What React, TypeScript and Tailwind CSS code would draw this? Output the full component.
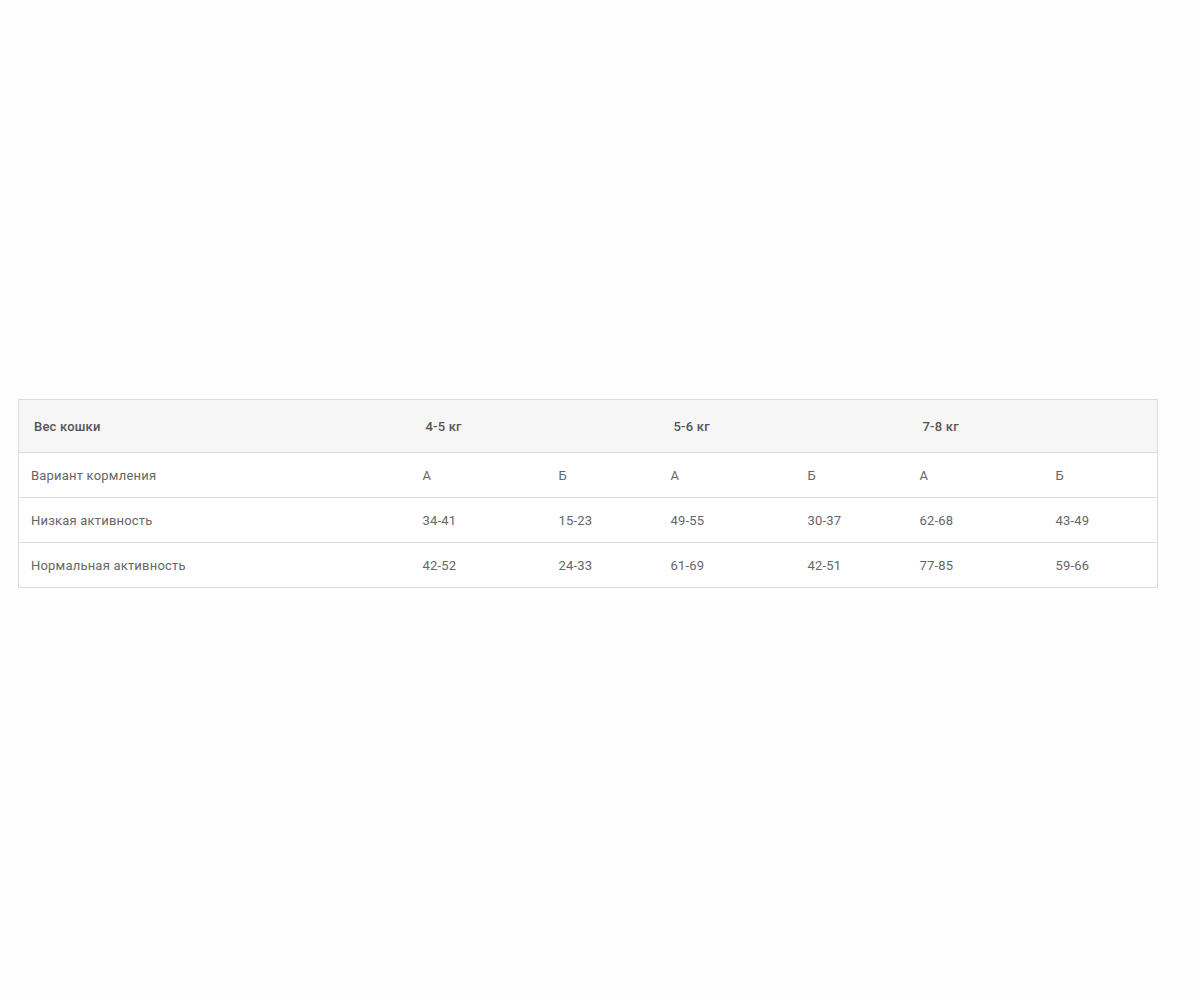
import React from "react";

const rows: string[][] = [
  ["Вариант кормления", "А", "Б", "А", "Б", "А", "Б"],
  ["Низкая активность", "34-41", "15-23", "49-55", "30-37", "62-68", "43-49"],
  ["Нормальная активность", "42-52", "24-33", "61-69", "42-51", "77-85", "59-66"],
];

export default function App() {
  return (
    <div className="w-[1200px] h-[1000px] bg-[#fefefe] pt-[399px] pl-[18px]" style={{ fontFamily: "Roboto, 'Noto Sans', sans-serif" }}>
      <table className="w-[1139px] border border-[#dcdcdc] border-collapse table-fixed text-[13px] tracking-[0.2px] text-[#666] bg-white">
        <colgroup>
          <col className="w-[392px]" />
          <col className="w-[136px]" />
          <col className="w-[112px]" />
          <col className="w-[137px]" />
          <col className="w-[112px]" />
          <col className="w-[136px]" />
          <col className="w-[114px]" />
        </colgroup>
        <thead>
          <tr className="bg-[#f6f6f6] h-[53px] border-b border-[#dcdcdc]">
            <th className="text-left font-medium text-[#555] pl-[15px] pt-[2px]">Вес кошки</th>
            <th colSpan={2} className="text-left font-medium text-[#555] pl-[15px] pt-[2px]">4-5 кг</th>
            <th colSpan={2} className="text-left font-medium text-[#555] pl-[15px] pt-[2px]">5-6 кг</th>
            <th colSpan={2} className="text-left font-medium text-[#555] pl-[15px] pt-[2px]">7-8 кг</th>
          </tr>
        </thead>
        <tbody>
          {rows.map((r, i) => (
            <tr key={i} className={"h-[45px] " + (i < rows.length - 1 ? "border-b border-[#dcdcdc]" : "")}>
              {r.map((c, j) => (
                <td key={j} className="pl-3 pt-[2px] font-normal">{c}</td>
              ))}
            </tr>
          ))}
        </tbody>
      </table>
    </div>
  );
}
